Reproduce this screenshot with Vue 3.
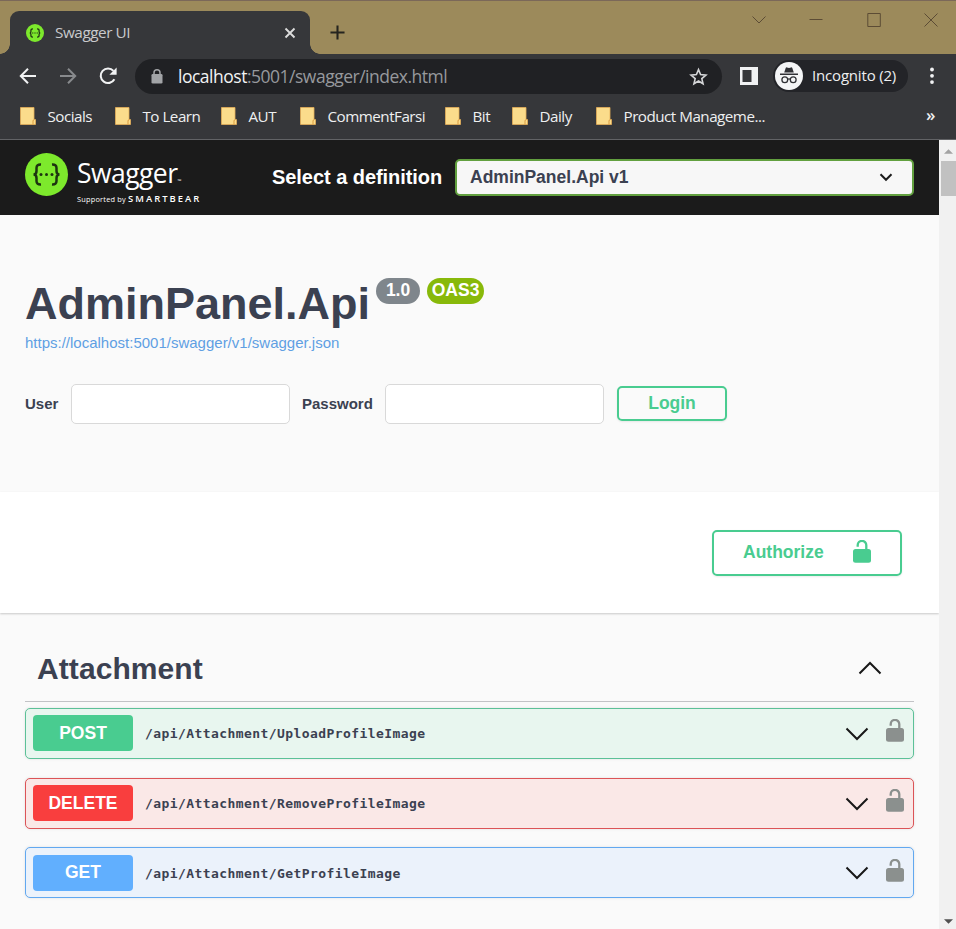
<script setup>
const bookmarks = ['Socials', 'To Learn', 'AUT', 'CommentFarsi', 'Bit', 'Daily', 'Product Manageme...']
const operations = [
  { method: 'POST', path: '/api/Attachment/UploadProfileImage' },
  { method: 'DELETE', path: '/api/Attachment/RemoveProfileImage' },
  { method: 'GET', path: '/api/Attachment/GetProfileImage' },
]
</script>

<template>
  <div class="window">
    <header class="titlebar">
      <div class="tab">
        <svg class="favicon" viewBox="0 0 44 44">
          <circle cx="22" cy="22" r="22" fill="#7de92c" />
          <path d="M17 12q-5 0-5 4v3q0 3-3 3q3 0 3 3v3q0 4 5 4M27 12q5 0 5 4v3q0 3 3 3q-3 0-3 3v3q0 4-5 4" fill="none" stroke="#223016" stroke-width="3" />
          <path d="M15 20.500h3v3h-3zM20.500 20.500h3v3h-3zM26 20.500h3v3h-3z" fill="#223016" />
        </svg>
        <span class="tab-title">Swagger UI</span>
        <svg class="tab-close" viewBox="0 0 12 12"><path d="M1.500 1.500l9 9M10.500 1.500l-9 9" stroke="#dcdcdc" stroke-width="1.900" /></svg>
      </div>
      <svg class="new-tab" viewBox="0 0 16 16"><path d="M8 .5v15M.5 8h15" stroke="#25241f" stroke-width="2.200" /></svg>
      <div class="controls">
        <svg viewBox="0 0 14 14"><path d="M.5 3.500l6.500 6.500l6.500-6.500" /></svg>
        <svg viewBox="0 0 14 14"><path d="M.5 6.500h13" /></svg>
        <svg viewBox="0 0 14 14"><path d="M.8.500h12.500v13h-12.500z" /></svg>
        <svg viewBox="0 0 14 14"><path d="M.5.500l13 13M13.500.500l-13 13" /></svg>
      </div>
    </header>

    <div class="toolbar">
      <svg class="nav" viewBox="0 0 18 18"><path d="M17 9h-15M9 1.800l-7.200 7.200l7.200 7.200" fill="none" stroke="#f1f2f3" stroke-width="2" /></svg>
      <svg class="nav" viewBox="0 0 18 18"><path d="M1 9h15M9 1.800l7.200 7.200l-7.200 7.200" fill="none" stroke="#888a8d" stroke-width="2" /></svg>
      <svg class="nav" viewBox="0 0 18 18"><path d="M15.400 12.300a7.300 7.300 0 1 1-.9-8.400" fill="none" stroke="#f1f2f3" stroke-width="2.100" /><path d="M17.600.500v7.200h-7.200z" fill="#f1f2f3" /></svg>
      <div class="address">
        <svg class="padlock" viewBox="0 0 12 15"><rect x=".5" y="5" width="11" height="9.500" rx="1.300" fill="#a2a4a7" /><path d="M3 6v-2.200a3 3 0 0 1 6 0v2.200" fill="none" stroke="#a2a4a7" stroke-width="1.500" /></svg>
        <span class="url"><b>localhost</b>:5001/swagger/index.html</span>
        <svg class="star" viewBox="0 0 20 19"><path d="M10 2.300l2.200 5.200l5.600.5l-4.300 3.700l1.300 5.500l-4.800-2.900l-4.800 2.900l1.300-5.500l-4.300-3.700l5.600-.5z" fill="none" stroke="#d4d5d7" stroke-width="1.700" /></svg>
      </div>
      <svg class="panel" viewBox="0 0 18 18"><path d="M0 0h18v18h-18zM2.500 3v12h9v-12z" fill="#f1f2f3" fill-rule="evenodd" /></svg>
      <div class="incognito">
        <svg class="spy" viewBox="0 0 28 28">
          <circle cx="14" cy="14" r="14" fill="#f4f5f6" />
          <path d="M9.200 10.500l1.500-4.400q.3-1 1.300-.7l2 .5l2-.5q1-.3 1.300.7l1.500 4.400zM5 11.500h18v1.400h-18z" fill="#303135" />
          <g fill="none" stroke="#303135" stroke-width="1.300"><circle cx="9.800" cy="17.800" r="2.900" /><circle cx="18.200" cy="17.800" r="2.900" /><path d="M12.700 17.300q1.300-.8 2.600 0" /></g>
        </svg>
        <span>Incognito (2)</span>
      </div>
      <svg class="dots" viewBox="0 0 4 18"><g fill="#f1f2f3"><circle cx="2" cy="2.500" r="1.900" /><circle cx="2" cy="8.800" r="1.900" /><circle cx="2" cy="15.100" r="1.900" /></g></svg>
    </div>

    <nav class="bookmarks">
      <div v-for="name in bookmarks" :key="name" class="bookmark">
        <svg viewBox="0 0 16 18"><path d="M.5.500h13.500v12h1.500v5h-15z" fill="#fbdc8b" stroke="#e6ae58" stroke-width=".8" /><path d="M13 17.500v-3.500q0-1.300 1.200-1.300" fill="none" stroke="#d99b40" /></svg>
        <span>{{ name }}</span>
      </div>
      <span class="more">»</span>
    </nav>

    <div class="viewport">
      <main class="page">
        <div class="topbar">
          <svg class="mark" viewBox="0 0 44 44">
            <circle cx="21.500" cy="21.500" r="21.500" fill="#7de92c" />
            <path d="M16 11.500q-4.500-.3-4.500 3.500v3q0 3.500-3 3.500q3 0 3 3.500v3q0 3.800 4.500 3.500M27 11.500q4.500-.3 4.500 3.500v3q0 3.500 3 3.500q-3 0-3 3.500v3q0 3.800-4.500 3.500" fill="none" stroke="#1d3410" stroke-width="2.500" />
            <g fill="#1d3410"><circle cx="16" cy="21.500" r="1.500" /><circle cx="21.500" cy="21.500" r="1.500" /><circle cx="27" cy="21.500" r="1.500" /></g>
          </svg>
          <div class="brand">
            <div class="wordmark">Swagger<small>™</small></div>
            <div class="support">Supported by <b>SMARTBEAR</b></div>
          </div>
          <label class="definition">Select a definition</label>
          <div class="select">
            <span>AdminPanel.Api v1</span>
            <svg viewBox="0 0 14 9"><path d="M1.500 1.300l5.500 5.500l5.500-5.500" fill="none" stroke="#1b1b1b" stroke-width="2" /></svg>
          </div>
        </div>

        <section class="info">
          <div class="heading">
            <h1>AdminPanel.Api</h1>
            <span class="pill version">1.0</span>
            <span class="pill oas">OAS3</span>
          </div>
          <a class="spec">https://localhost:5001/swagger/v1/swagger.json</a>
          <div class="login">
            <label class="user">User</label>
            <input type="text" />
            <label class="password">Password</label>
            <input type="password" />
            <button class="btn login-btn">Login</button>
          </div>
        </section>

        <section class="scheme">
          <button class="btn authorize">
            <span>Authorize</span>
            <svg viewBox="0 0 18 23"><path d="M4.700 6.800v-1.600a4.300 4.300 0 0 1 8.600 0v5" fill="none" stroke="#49cc90" stroke-width="2.300" /><rect x="0" y="9" width="18" height="13.800" rx="2.500" fill="#49cc90" /></svg>
          </button>
        </section>

        <section class="operations">
          <div class="tag">
            <h3>Attachment</h3>
            <svg viewBox="0 0 24 14"><path d="M1.500 12.500l10.500-10.500l10.500 10.500" fill="none" stroke="#181818" stroke-width="2" /></svg>
          </div>
          <div class="list">
            <div v-for="op in operations" :key="op.method" class="op" :class="op.method.toLowerCase()">
              <span class="method">{{ op.method }}</span>
              <span class="path">{{ op.path }}</span>
              <svg class="arrow" viewBox="0 0 24 14"><path d="M1.500 1.500l10.500 10.500l10.500-10.500" fill="none" stroke="#181818" stroke-width="2" /></svg>
              <svg class="lock" viewBox="0 0 18 23"><path d="M4.700 6.800v-1.600a4.300 4.300 0 0 1 8.600 0v5" fill="none" stroke="#8b908e" stroke-width="2.300" /><rect x="0" y="9" width="18" height="13.800" rx="2.500" fill="#8b908e" /></svg>
            </div>
          </div>
        </section>
      </main>

      <aside class="scrollbar">
        <svg viewBox="0 0 10 5"><path d="M0 5l5-5l5 5z" fill="#a3a3a3" /></svg>
        <div class="thumb"></div>
        <svg class="down" viewBox="0 0 10 5"><path d="M0 0l5 5l5-5z" fill="#505050" /></svg>
      </aside>
    </div>
  </div>
</template>

<style>
body { margin: 0; overflow: hidden; }
</style>

<style scoped>
* { box-sizing: border-box; }
svg { display: block; flex: none; }
.window { width: 956px; height: 929px; display: flex; flex-direction: column; background: #36373a; font-family: "Open Sans", "Noto Sans", sans-serif; overflow: hidden; }
.titlebar { height: 54px; flex: none; display: flex; align-items: flex-start; background: #9c8a5b; border-top: 1px solid #7b6859; padding: 10px 18px 0 10px; }
.tab { position: relative; width: 300px; height: 43px; flex: none; display: flex; align-items: center; background: #36373a; border-radius: 9px 9px 0 0; padding: 0 14px 0 16px; }
.tab::before, .tab::after { content: ""; position: absolute; bottom: 0; width: 10px; height: 10px; }
.tab::before { left: -10px; background: radial-gradient(circle at 0 0, #9c8a5b 9.500px, #36373a 10px); }
.tab::after { right: -10px; background: radial-gradient(circle at 100% 0, #9c8a5b 9.500px, #36373a 10px); }
.favicon { width: 18px; height: 18px; }
.tab-title { margin: 0 0 2px 11px; color: #c9cacc; font-size: 15.300px; letter-spacing: -.45px; flex: 1; }
.tab-close { width: 12px; height: 12px; }
.new-tab { width: 15px; height: 15px; margin: 14px 0 0 20px; }
.controls { margin: 2px 0 0 auto; display: flex; gap: 43.300px; }
.controls svg { width: 14px; height: 14px; fill: none; stroke: #5c4c35; stroke-width: 1; }
.toolbar { height: 45px; flex: none; display: flex; align-items: center; padding: 0 0 2px 19px; }
.nav { width: 18px; height: 18px; margin-right: 22px; }
.address { width: 587px; height: 35px; margin: 1px 0 0 -4px; border-radius: 18px; background: #202124; display: flex; align-items: center; padding: 0 14px 0 16px; }
.padlock { width: 12px; height: 15px; }
.url { margin-left: 15px; flex: 1; color: #97999d; font-size: 17.500px; letter-spacing: -.49px; white-space: nowrap; }
.url b { font-weight: 400; color: #f2f3f4; }
.star { width: 19px; height: 19px; }
.panel { width: 18px; height: 18px; margin-left: 18px; }
.incognito { width: 135px; height: 32px; margin-left: 15px; border-radius: 16px; background: #232428; display: flex; align-items: center; padding-left: 2px; color: #eeeff0; font-size: 15px; white-space: nowrap; }
.incognito span { margin: 0 0 1px 9px; letter-spacing: -.18px; }
.spy { width: 28px; height: 28px; }
.dots { width: 4px; height: 18px; margin-left: 22px; }
.bookmarks { height: 41px; flex: none; display: grid; grid-template-columns: 95px 106px 79px 145px 67px 84px 330px 20px; padding: 0 0 6px 20px; align-items: center; border-bottom: 1px solid #626366; color: #eeeff0; font-size: 15.200px; letter-spacing: -.5px; white-space: nowrap; }
.bookmark { display: flex; align-items: center; gap: 11.500px; }
.bookmark svg { width: 16px; height: 18px; }
.more { font-size: 17px; font-weight: 600; line-height: 20px; padding-bottom: 2px; }
.viewport { flex: 1; min-height: 0; display: flex; }
.page { width: 939px; background: #fafafa; color: #3b4151; font-family: "Liberation Sans", sans-serif; }
.topbar { height: 75px; display: flex; align-items: center; background: #1b1b1b; padding: 0 25px; color: #fff; }
.mark { width: 44px; height: 44px; margin-top: -6px; }
.brand { width: 187px; margin: 13px 0 0 8px; font-family: "Open Sans", sans-serif; white-space: nowrap; }
.wordmark { font-size: 26.500px; line-height: 20px; letter-spacing: -.55px; font-weight: 400; }
.wordmark small { font-size: 5px; letter-spacing: 0; }
.support { font-size: 7.400px; line-height: 11px; letter-spacing: .2px; margin-top: 2px; padding-bottom: 1px; }
.support b { font-size: 9.400px; font-weight: 600; letter-spacing: 2.050px; }
.definition { width: 183px; margin-left: 8px; font-size: 20px; font-weight: 700; white-space: nowrap; letter-spacing: -.05px; }
.select { width: 459px; height: 37px; border: 2px solid #62a03f; border-radius: 5px; background: #f7f7f7; color: #3b4151; display: flex; align-items: center; justify-content: space-between; padding: 0 19px 0 13px; font-size: 17.500px; font-weight: 700; }
.select svg { width: 14px; height: 9px; }
.info { height: 277px; padding: 62px 25px 0; }
.heading { display: flex; align-items: flex-start; height: 57px; }
h1 { margin: 1px 0 0; font-size: 45px; line-height: 52px; font-weight: 700; }
.pill { height: 26px; margin-top: 1px; border-radius: 13px; color: #fff; font-size: 17.500px; line-height: 25px; font-weight: 700; text-align: center; }
.version { width: 44px; margin-left: 6px; background: #7f868c; }
.oas { width: 57px; margin-left: 7px; background: #88b90a; }
.spec { display: block; color: #5f9fe3; font-size: 15px; line-height: 18px; }
.login { display: flex; align-items: center; margin-top: 32px; font-size: 15px; font-weight: 700; }
.login label { padding-bottom: 2px; }
.user { width: 46px; }
.password { width: 83px; margin-left: 12px; }
.login input { width: 219px; height: 40px; border: 1px solid #d9d9d9; border-radius: 5px; background: #fff; padding: 0; }
.btn { border: 2px solid #49cc90; border-radius: 5px; background: transparent; color: #49cc90; font-family: "Liberation Sans", sans-serif; font-size: 17.500px; font-weight: 700; box-shadow: 0 1px 2px rgba(0, 0, 0, .08); padding: 0; }
.login-btn { width: 110px; height: 35px; margin: 0 0 2px 13px; }
.scheme { height: 121px; background: #fff; box-shadow: 0 1px 2px rgba(0, 0, 0, .2); display: flex; justify-content: flex-end; padding: 38px 37px 0 0; }
.authorize { width: 190px; height: 46px; display: flex; align-items: center; justify-content: space-between; padding: 0 29px 2px; }
.authorize svg { width: 18px; height: 23px; margin: -1px .5px 0 0; }
.operations { padding: 0 25px; }
.tag { height: 89px; display: flex; align-items: center; justify-content: space-between; padding: 21px 32.500px 0 12px; border-bottom: 1px solid #c2c3c6; }
h3 { margin: 2px 0 0; font-size: 30px; line-height: 34px; font-weight: 700; letter-spacing: .08px; }
.tag svg, .arrow { width: 24px; height: 14px; }
.list { display: flex; flex-direction: column; gap: 18.600px; padding-top: 6px; }
.op { height: 51px; border: 1px solid; border-radius: 5px; display: flex; align-items: flex-start; padding: 6.400px 9.500px 0 7px; box-shadow: 0 0 3px rgba(0, 0, 0, .1); }
.method { width: 100px; height: 36px; border-radius: 4px; color: #fff; font-size: 17.500px; line-height: 36px; font-weight: 700; text-align: center; }
.path { flex: 1; margin-left: 12px; font-family: "DejaVu Sans Mono", monospace; font-size: 13px; line-height: 38px; font-weight: 700; letter-spacing: .42px; }
.arrow { margin-top: 12px; }
.lock { width: 18px; height: 23px; margin: 4px 0 0 17px; }
.post { border-color: #5cc198; background: #e8f6ef; }
.post .method { background: #49cc90; }
.delete { border-color: #dc5357; background: #fae8e7; }
.delete .method { background: #f93e3e; }
.op.get { border-color: #61a8f0; background: #ebf2fb; }
.get .method { background: #61affe; line-height: 35px; }
.get .arrow { margin-top: 11.500px; }
.scrollbar { width: 17px; background: #f1f1f1; display: flex; flex-direction: column; align-items: flex-end; padding: 9px 2px 5px 0; }
.scrollbar svg { width: 9px; height: 5px; margin-right: 1px; }
.thumb { width: 15px; height: 35px; margin: 7px -2px 0 0; background: #c1c1c1; flex: none; }
.scrollbar .down { margin-top: auto; }
</style>
